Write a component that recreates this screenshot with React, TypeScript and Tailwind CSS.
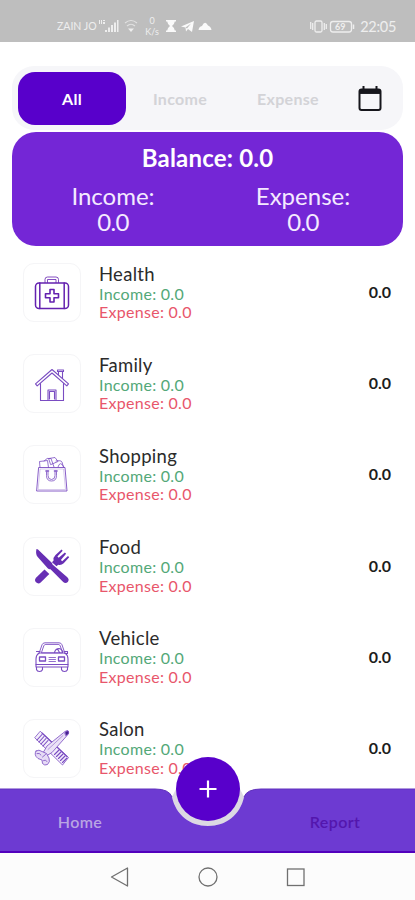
import type { ReactNode } from "react"

const lineIcon = {
    width: 36,
    height: 36,
    viewBox: "0 0 36 36",
    fill: "none",
    stroke: "#7a4cc2",
    strokeWidth: 1.1,
    strokeLinejoin: "round" as const,
    strokeLinecap: "round" as const,
}

const HealthIcon = () => (
    <svg {...lineIcon} stroke="#6422b0">
        <rect x="1.5" y="8" width="33" height="25.5" rx="3.5" strokeWidth="1.5" />
        <path d="M5.8 8v25.5M30.2 8v25.5" strokeWidth="1.5" />
        <path d="M11 7.500V4.500q0-2.500 2.500-2.500h8.500q2.500 0 2.500 2.500v3M13.500 7.500V4.500h8.500v3" strokeWidth="0.8" />
        <path d="M16 14.500h4v4.200h4.500v4H20v4.300h-4v-4.300h-4.500v-4H16z" strokeWidth="1.6" />
    </svg>
)

const FamilyIcon = () => (
    <svg {...lineIcon}>
        <path d="M1.500 17.800L18 3.500l16.500 14.300-1.700 2L18 7 3.200 19.800z" />
        <path d="M6.500 17.500V34.500h23V17.500" />
        <path d="M14 34.500V24h8v10.500M15.500 33V25.500h5V33" />
        <path d="M24.500 8.500V5.500h4v7M23.500 4h6v1.500h-6z" />
    </svg>
)

const ShoppingIcon = () => (
    <svg {...lineIcon} strokeWidth="0.9">
        <path d="M5 10.500h26l2 23.500H3z" />
        <path d="M6.500 12h23l2 20.500h-27z" strokeWidth="0.3" />
        <path d="M6 10.500L5.500 4.500l8-1 1 7M10 4q3-4 7-2.500L20 10M15 1.500l6-1 3 4-7 3zM22 4q5-1 6 1l1.500 5.500M24 10q2-7 6 0" strokeWidth="0.8" />
        <path d="M12.500 15v3.500q0 5.500 5 5.500t5-5.500V15M14 15v3.500q0 4 3.500 4t3.500-4V15" strokeWidth="0.8" />
        <path d="M12 14h2.500M20.500 14H23" strokeWidth="1.6" />
    </svg>
)

const FoodIcon = () => (
    <svg {...lineIcon} fill="#672fb4" stroke="none">
        <path d="M2.500 1Q3.200.8 4 1.500L17.500 14.500q1 1 1 2l14.800 12.800q2.400 2.300.5 4.600-2.300 2-4.600 0L16.500 21.200q-1.600.4-2.800-1L3.500 8.800Q1.200 6 2.500 1z" />
        <path d="M10.500 21.500l4.800 4.500-8.600 8.500q-2.400 2-4.700-.2-2-2.300 0-4.600z" />
        <path d="M27.500 1.500l1.200 1.200-5.300 5.700 1.300 1.300 6.200-5.200 1.200 1.200-5.200 6.200 1.300 1.300L34 8l1.200 1.200-5.500 6q-2.500 2.300-5.500 1.500l-1.700 1.500-4.500-4 1.600-1.700q-.6-3.200 1.900-5.500z" />
    </svg>
)

const VehicleIcon = () => (
    <svg {...lineIcon}>
        <path d="M5 14.500L8 5.800q.8-2 3-2h14q2.200 0 3 2l3 8.700M7.500 13.500l2.300-6.700q.6-1.400 2-1.400h12.400q1.400 0 2 1.400l2.300 6.700z" strokeWidth="0.9" />
        <path d="M5 14h26q3 2 3 6v5.500H2V20q0-4 3-6z" />
        <path d="M2.500 12.500H6M30 12.500h3.500v2H31M2 25.500h32v2.500H2zM2.500 28v2.500q.5 2 3 2t3-2V28M27.500 28v2.500q.5 2 3 2t3-2V28" />
        <path d="M5.500 18h6v4h-6zM24.500 18h6v4h-6z" strokeWidth="1.3" />
        <path d="M15 18.500h6.500M15 20.500h6.500M15 22.500h6.500" strokeWidth="0.8" />
        <path d="M20.500 13.500q1-4 4.500-4 3.500.5 3.500 4M23.500 10l2 3.500" />
    </svg>
)

const SalonIcon = () => (
    <svg {...lineIcon} strokeWidth="0.8">
        <path d="M6.500 1.500l28 26L28.500 35 1 8z" fill="#f3edfb" />
        <path d="M8 4.500L3 10M10 6.500L5 12M12 8.500L7 14M14 10.500L9 16M20.500 24.500L25 20M22.500 26.500L27 22M24.500 28.500L29 24M26.500 30.500L31 26M28.500 32.500L33 28" strokeWidth="1.1" />
        <path d="M8 3l25 23.500" strokeWidth="1.1" />
        <path d="M34 1q1.500 2-.5 4L18 22.500l-5 3-3.500-3.500 3.500-6L31 1.500q2-1.500 3-.5z" fill="#ebe2f7" />
        <path d="M31 2.500q3-2.500 3.700-.5T32 5.500z" fill="#43208c" />
        <path d="M29 5.500L14 19.500" strokeWidth="0.5" />
        <path d="M2 21q3-2 6 .5l4.500 2 2.500 4.500q1.500 4-1.500 6.500-3 1.500-5-1l-.5-3.500-4-1.500Q-.5 25 2 21z" fill="#e6dbf5" />
        <path d="M3 23.500q2.500-1 4 1.500M8.500 27l3-2.500M9.500 30.500q2.500-1.500 3.500 1" />
    </svg>
)

const categories: { name: string; icon: ReactNode }[] = [
    { name: "Health", icon: <HealthIcon /> },
    { name: "Family", icon: <FamilyIcon /> },
    { name: "Shopping", icon: <ShoppingIcon /> },
    { name: "Food", icon: <FoodIcon /> },
    { name: "Vehicle", icon: <VehicleIcon /> },
    { name: "Salon", icon: <SalonIcon /> },
]

function StatusBar() {
    return (
        <div className="flex h-[42px] shrink-0 items-end bg-[#bebebe] pr-[19px] pb-[8px] pl-[57px] text-[#eeeeee]">
            <span className="w-[40px] text-[10.5px] leading-[16px] whitespace-nowrap">ZAIN JO</span>
            <svg width="22" height="16" viewBox="0 0 22 16" fill="currentColor">
                <path d="M2 2h1v4H2zM4 2h1v4H4zM6 2h2v1H6zM6 4h2v2H6zM8 12h2v2H8zM11 9.500h2V14h-2zM14 7h2v7h-2zM17 4.500h2V14h-2zM20 2h1.500v12H20z" />
            </svg>
            <svg className="ml-[5px]" width="14" height="16" viewBox="0 0 14 16" fill="none" stroke="currentColor" strokeWidth="1.200">
                <path d="M1 5q6-5 12 0M3 8q4-3.500 8 0" opacity=".75" />
                <path d="M4 10.500h6L7 14z" fill="currentColor" stroke="none" />
            </svg>
            <div className="ml-[6px] w-[16px] text-center text-[9px] leading-[11px]">
                <p>0</p>
                <p className="-mb-[3px]">K/s</p>
            </div>
            <svg className="ml-[5px]" width="12" height="16" viewBox="0 0 12 16" fill="#fafafa">
                <path d="M1 2h10v1.500H9.800Q9.500 6 7 8q2.500 1.500 2.800 4.500H11V14H1v-1.500h1.200Q2.500 9.500 5 8 2.500 6 2.200 3.500H1z" />
            </svg>
            <svg className="ml-[4px]" width="14" height="16" viewBox="0 0 14 16" fill="#fafafa">
                <path d="M0 8.500L13 3l-2 11-4-3-2 2.500-.5-4z" />
                <path d="M4.500 9.500L10 5.500 6 10.500" fill="#bebebe" />
            </svg>
            <svg className="ml-[3px]" width="14" height="16" viewBox="0 0 14 16" fill="#fafafa">
                <path d="M.5 12q.5-3.500 3.500-4Q7 2 10 7.500q3 1 3.500 4.500z" />
            </svg>
            <svg className="ml-auto" width="46" height="16" viewBox="0 0 46 16" fill="none" stroke="currentColor" strokeWidth="1.300">
                <rect x="5" y="3" width="7" height="11" rx="1.500" />
                <path d="M2.700 5v7M14.300 5v7M.7 4v7M16.300 6v5" />
                <rect x="20.500" y="3.500" width="21" height="10.500" rx="2.500" />
                <path d="M43.500 6.500v4.500" strokeWidth="1.500" />
                <text x="25" y="12" fontSize="9" fontWeight="700" fill="currentColor" stroke="none">69</text>
            </svg>
            <span className="ml-[4px] text-[14.500px] leading-[15px] tracking-[-0.3px]">22:05</span>
        </div>
    )
}

function Tabs() {
    return (
        <div className="mx-[12px] flex h-[64px] items-center rounded-[22px] bg-[#f6f6f9] pt-[1px] pl-[6px] text-[16px] font-bold tracking-[0.3px] text-[#d3d3d7]">
            <button className="h-[53px] w-[108px] rounded-[17px] bg-[#5800cb] text-white">All</button>
            <button className="w-[108px]">Income</button>
            <button className="w-[108px]">Expense</button>
            <svg className="ml-[16px]" width="24" height="28" viewBox="0 0 24 28" fill="none" stroke="#16161c">
                <rect x="1.500" y="4.500" width="21" height="20.500" rx="2" strokeWidth="2" />
                <path d="M2 6.700h20" strokeWidth="4.500" />
                <path d="M5.500 1v4M18.500 1v4" strokeWidth="2" />
            </svg>
        </div>
    )
}

function BalanceCard() {
    return (
        <div className="mx-[12px] mt-[2px] h-[114px] rounded-[24px] bg-[#7426d6] pt-[13px] text-center text-[24px] leading-[26px] text-white">
            <h2 className="font-bold tracking-[0.2px]">Balance: 0.0</h2>
            <div className="mt-[12px] flex text-[#f4eaff]">
                <div className="flex-1 pl-[6px]">
                    <p>Income:</p>
                    <p className="tracking-[-0.7px]">0.0</p>
                </div>
                <div className="flex-1 pr-[5px]">
                    <p>Expense:</p>
                    <p className="tracking-[-0.7px]">0.0</p>
                </div>
            </div>
        </div>
    )
}

function BottomNav() {
    return (
        <nav className="relative flex h-[64px] shrink-0 pt-[1px] text-[16px] font-semibold tracking-[0.4px]">
            <svg className="absolute -top-[1px] left-0" width="415" height="65" viewBox="0 0 415 65">
                <path d="M172 9C176 27 190 38 208 38S240 27 244 9L240 1H176z" fill="#dcd9e3" />
                <path d="M0 1H155Q169 1 172 9C176 27 190 38 208 38S240 27 244 9Q247 1 261 1H415V65H0z" fill="#6d3ad2" />
                <path d="M0 1H155Q169 1 172 9M244 9Q247 1 261 1H415" fill="none" stroke="#6030bd" strokeWidth="1" />
                <path d="M0 64H415" stroke="#5200bd" strokeWidth="2" />
            </svg>
            <button className="relative mr-auto w-[160px] text-[#b9a5e3]">Home</button>
            <button className="relative w-[160px] text-[#5316ad]">Report</button>
            <button className="absolute -top-[32px] left-[176px] flex h-[64px] w-[64px] items-center justify-center rounded-full bg-[#5800cb]">
                <svg width="18" height="18" viewBox="0 0 18 18" stroke="white" strokeWidth="2.200">
                    <path d="M9 .5v17M.5 9h17" />
                </svg>
            </button>
        </nav>
    )
}

export default function App() {
    return (
        <div className="flex h-[900px] w-[415px] flex-col overflow-hidden bg-white font-['Lato',sans-serif]">
            <StatusBar />
            <main className="min-h-0 flex-1 overflow-hidden pt-[24px]">
                <Tabs />
                <BalanceCard />
                <ul className="mt-[17px] flex flex-col gap-[32.200px]">
                    {categories.map((e) => (
                        <li key={e.name} className="flex h-[59px] shrink-0 items-center pr-[24px] pl-[23px]">
                            <div className="flex h-[59px] w-[58px] items-center justify-center rounded-[11px] border border-[#f5f5f7]">
                                {e.icon}
                            </div>
                            <div className="ml-[18px] text-[16px] leading-[18.500px] tracking-[0.280px]">
                                <h3 className="text-[18.500px] leading-[21px] text-[#2b2b2b]">{e.name}</h3>
                                <p className="text-[#53a878]">Income: 0.0</p>
                                <p className="text-[#e8566b]">Expense: 0.0</p>
                            </div>
                            <span className="mb-[1px] ml-auto text-[16px] font-bold text-[#1d1d1d]">0.0</span>
                        </li>
                    ))}
                </ul>
            </main>
            <BottomNav />
            <div className="flex h-[47px] shrink-0 items-center justify-center bg-[#fcfcfc]">
                <svg width="196" height="20" viewBox="0 0 196 20" fill="none" stroke="#707070" strokeWidth="1.300">
                    <path d="M17.500 1v18L1.500 10z" strokeLinejoin="round" />
                    <circle cx="98" cy="10" r="9" />
                    <rect x="177.500" y="2" width="16.500" height="16.500" />
                </svg>
            </div>
        </div>
    )
}
